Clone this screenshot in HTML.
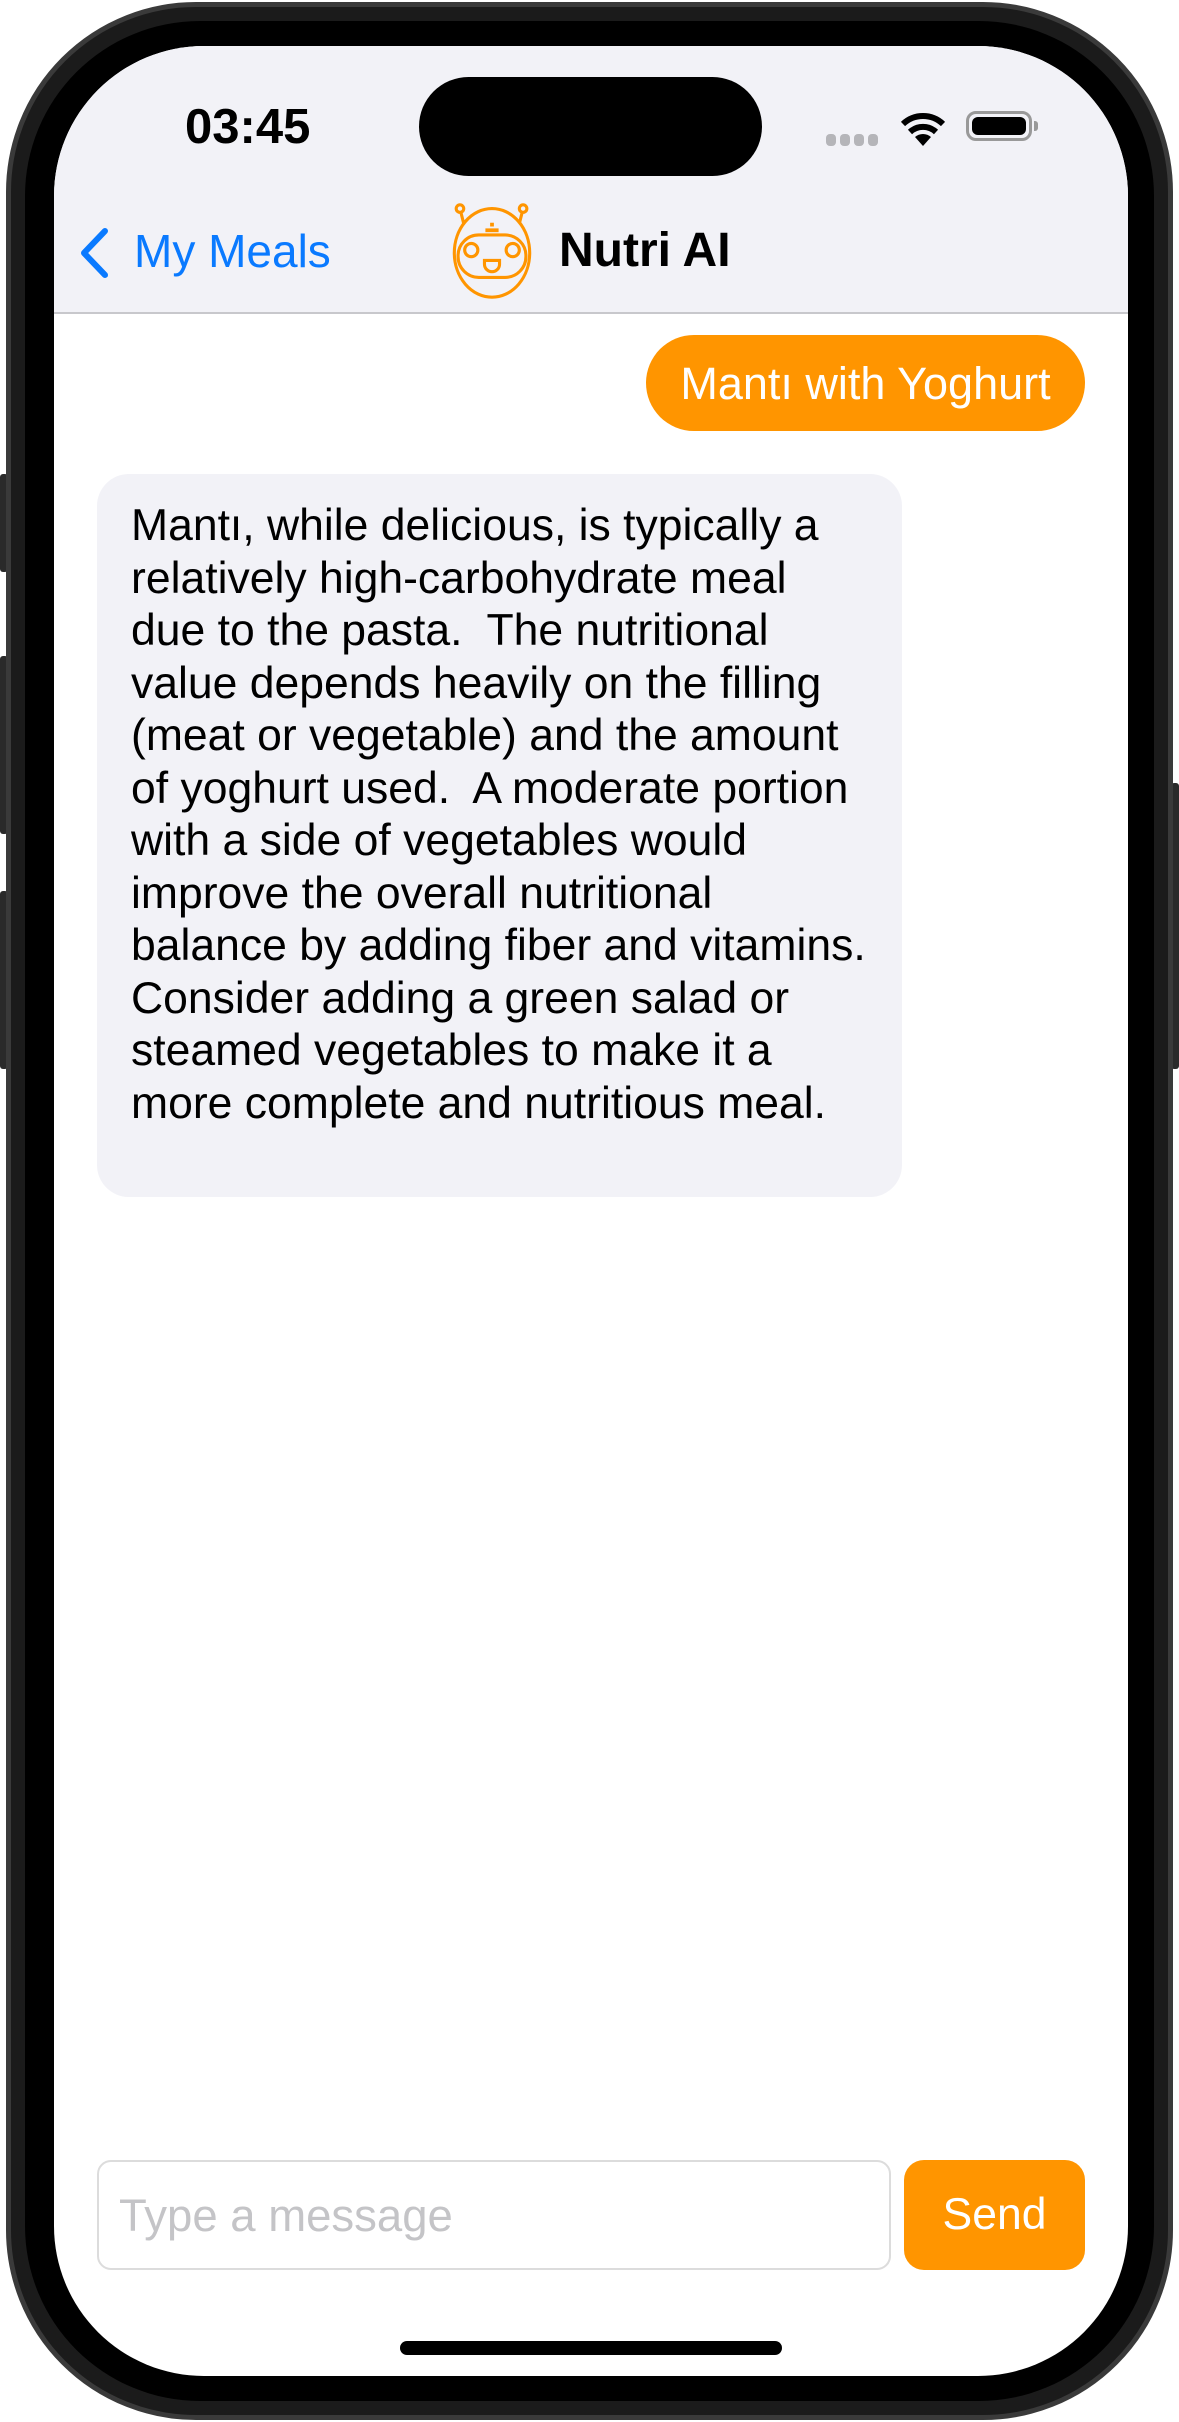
<!DOCTYPE html>
<html><head><meta charset="utf-8">
<style>
*{margin:0;padding:0;box-sizing:border-box}
html,body{width:1179px;height:2422px;background:#fff;overflow:hidden;font-family:"Liberation Sans",sans-serif}
.phone{position:absolute;left:6px;top:2px;width:1167px;height:2418px;border-radius:190px;background:#1b1b1b;border:5px solid #3a3a3a}
.bezel{position:absolute;left:14px;top:14px;right:14px;bottom:14px;border-radius:175px;background:#000}
.screen{position:absolute;left:54px;top:46px;width:1074px;height:2330px;border-radius:150px;background:#fff;overflow:hidden}
.nav{position:absolute;left:0;top:0;width:100%;height:268px;background:#f2f2f7;border-bottom:2px solid #c8c8cc}
.btn{position:absolute;background:#2a2a2a;border-radius:3px}
.t{position:absolute;white-space:nowrap}
</style></head><body>
<div class="btn" style="left:0;top:474px;width:8px;height:98px"></div>
<div class="btn" style="left:0;top:656px;width:8px;height:178px"></div>
<div class="btn" style="left:0;top:891px;width:8px;height:178px"></div>
<div class="btn" style="left:1171px;top:783px;width:8px;height:286px"></div>
<div class="phone"><div class="bezel"></div></div>
<div class="screen">
 <div class="nav"></div>
 <div class="t" style="left:131px;top:53px;font-size:49px;font-weight:bold;color:#000">03:45</div>
 <div style="position:absolute;left:365px;top:31px;width:343px;height:99px;border-radius:50px;background:#000"></div>
 <div style="position:absolute;left:772px;top:88px;width:52px;height:12px">
  <span style="position:absolute;left:0;width:10px;height:12px;border-radius:4px;background:#b5b5b9"></span>
  <span style="position:absolute;left:14px;width:10px;height:12px;border-radius:4px;background:#b5b5b9"></span>
  <span style="position:absolute;left:28px;width:10px;height:12px;border-radius:4px;background:#b5b5b9"></span>
  <span style="position:absolute;left:42px;width:10px;height:12px;border-radius:4px;background:#b5b5b9"></span>
 </div>
 <svg style="position:absolute;left:846px;top:66px" width="46" height="36" viewBox="0 0 46 36"><path d="M23 34 L15 25 A12 12 0 0 1 31 25 Z" fill="#000"/><path d="M10 20 A19 19 0 0 1 36 20" stroke="#000" stroke-width="6" fill="none"/><path d="M3 12 A29 29 0 0 1 43 12" stroke="#000" stroke-width="6" fill="none"/></svg>
 <div style="position:absolute;left:912px;top:65px;width:66px;height:30px;border:3px solid #999;border-radius:10px;padding:3px"><div style="width:100%;height:100%;background:#000;border-radius:6px"></div></div>
 <div style="position:absolute;left:980px;top:75px;width:4px;height:10px;background:#999;border-radius:0 3px 3px 0"></div>
 <svg style="position:absolute;left:23px;top:181px" width="34" height="52" viewBox="0 0 34 52"><path d="M28 4 L7 26 L28 48" stroke="#0a7aff" stroke-width="6" fill="none" stroke-linecap="round" stroke-linejoin="round"/></svg>
 <div class="t" style="left:80px;top:178px;font-size:46px;color:#0a7aff">My Meals</div>
 <svg style="position:absolute;left:390px;top:156px" width="96" height="98" viewBox="12 10 84 104">
  <g stroke="#ff9500" stroke-width="3.3" fill="none">
   <circle cx="20" cy="17" r="4"/><circle cx="87" cy="17" r="4"/>
   <path d="M21 21 L24 33 M86 21 L83 33"/>
   <ellipse cx="54" cy="64" rx="40" ry="47"/>
   <rect x="18" y="45" width="72" height="45" rx="22"/>
   <circle cx="32" cy="61" r="7"/><circle cx="76" cy="61" r="7"/>
   <path d="M46 72 L62 72 L62 76 A8 8 0 0 1 46 76 Z"/>
  </g>
  <rect x="47" y="38" width="14" height="4" fill="#ff9500"/><rect x="52" y="32" width="4" height="4" fill="#ff9500"/>
 </svg>
 <div class="t" style="left:505px;top:177px;font-size:48px;font-weight:bold;color:#000">Nutri AI</div>

 <div style="position:absolute;left:592px;top:289px;width:439px;height:96px;border-radius:48px;background:#ff9500"></div>
 <div class="t" style="left:592px;width:439px;text-align:center;top:312px;font-size:45px;color:#fff">Mantı with Yoghurt</div>

 <div style="position:absolute;left:43px;top:428px;width:805px;height:723px;border-radius:32px;background:#f2f2f7"></div>
 <div class="t" style="left:77px;top:454px;font-size:44.5px;line-height:52.5px;color:#000">Mantı, while delicious, is typically a<br>relatively high-carbohydrate meal<br>due to the pasta.&nbsp; The nutritional<br>value depends heavily on the filling<br>(meat or vegetable) and the amount<br>of yoghurt used.&nbsp; A moderate portion<br>with a side of vegetables would<br>improve the overall nutritional<br>balance by adding fiber and vitamins.<br>Consider adding a green salad or<br>steamed vegetables to make it a<br>more complete and nutritious meal.</div>

 <div style="position:absolute;left:43px;top:2114px;width:794px;height:110px;border:2px solid #dcdcdc;border-radius:14px;background:#fff"></div>
 <div class="t" style="left:65px;top:2144px;font-size:45.5px;color:#c4c4c7">Type a message</div>
 <div style="position:absolute;left:850px;top:2114px;width:181px;height:110px;border-radius:20px;background:#ff9500"></div>
 <div class="t" style="left:850px;width:181px;text-align:center;top:2144px;font-size:44.5px;color:#fff">Send</div>
 <div style="position:absolute;left:346px;top:2295px;width:382px;height:14px;border-radius:7px;background:#000"></div>
</div>
</body></html>
